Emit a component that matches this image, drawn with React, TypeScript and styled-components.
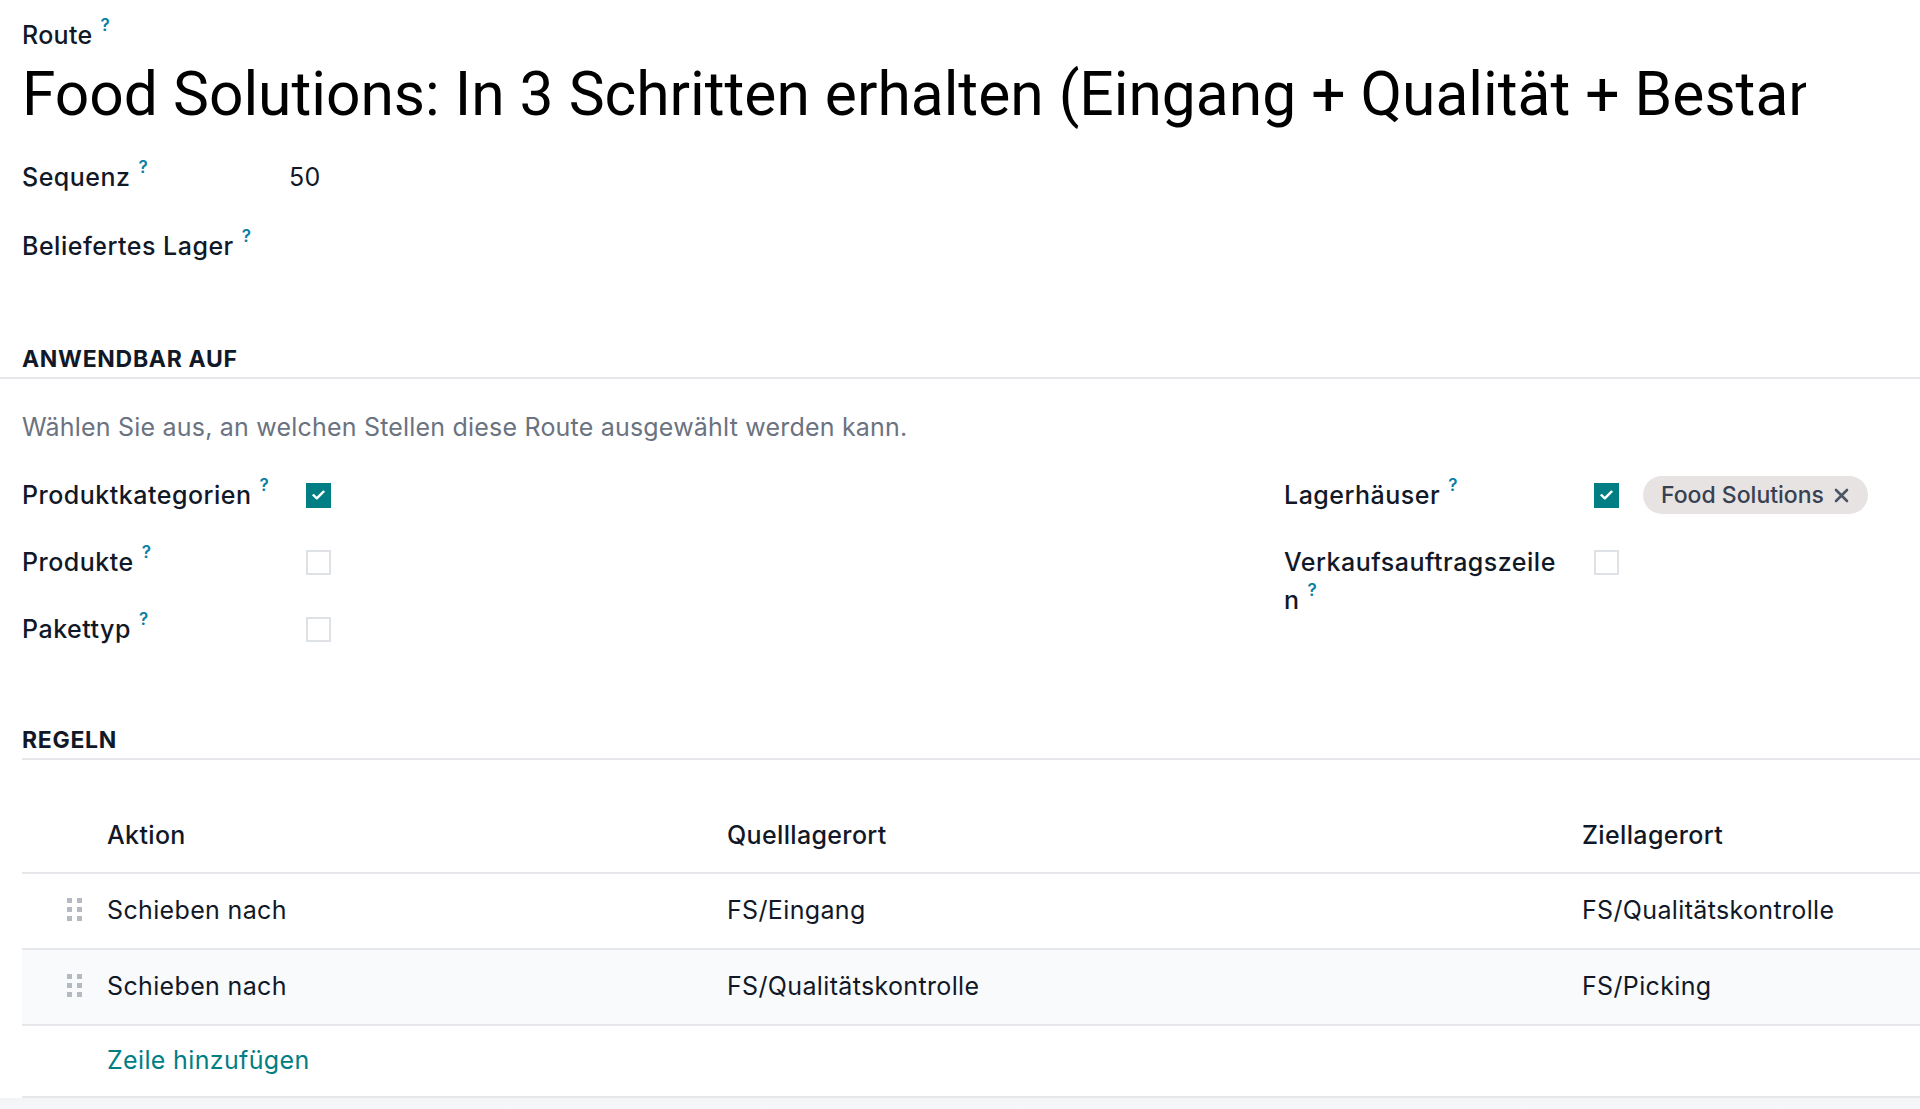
import styled, { createGlobalStyle } from 'styled-components';

const GlobalStyle = createGlobalStyle`
  html, body {
    margin: 0;
    padding: 0;
    background: #ffffff;
  }
  body {
    font-family: Inter, 'Noto Sans', 'Liberation Sans', sans-serif;
    color: #111827;
    overflow: hidden;
  }
`;

const Page = styled.div`
  width: 1920px;
  height: 1109px;
  overflow: hidden;
  display: flex;
  flex-direction: column;
`;

const Sheet = styled.div`
  padding-left: 22px;
  display: flex;
  flex-direction: column;
`;

const Help = styled.sup`
  color: #0a7fa3;
  font-size: 17px;
  font-weight: 600;
  margin-left: 8px;
  vertical-align: top;
  position: relative;
  top: -10px;
  letter-spacing: 0;
`;

const RouteLabel = styled.div`
  padding-top: 17px;
  font-size: 25px;
  line-height: 36px;
  font-weight: 500;
  letter-spacing: 0.3px;
`;

const Title = styled.h1`
  margin: 6px 0 0;
  width: 1784px;
  font-family: Roboto, 'Liberation Sans', sans-serif;
  font-size: 60.5px;
  line-height: 72px;
  font-weight: 400;
  color: #000000;
  white-space: nowrap;
  overflow: hidden;
`;

const FieldRow = styled.div<{ $labelWidth: number }>`
  display: grid;
  grid-template-columns: ${(p) => p.$labelWidth}px 1fr;
  align-items: start;
  min-height: 46px;
  padding: 4px 0;
  box-sizing: border-box;
`;

const FieldLabel = styled.div`
  font-size: 25px;
  line-height: 38px;
  font-weight: 500;
  letter-spacing: 0.5px;
  word-break: break-all;
  padding-right: 16px;
`;

const FieldValue = styled.div`
  font-size: 25px;
  line-height: 38px;
  letter-spacing: 0.4px;
  display: flex;
  align-items: center;
  gap: 24px;
  min-height: 38px;
`;

const HeaderFields = styled.div`
  display: flex;
  flex-direction: column;
  gap: 23px;
  margin-top: 23px;
`;

const SectionTitle = styled.div<{ $bleed?: boolean }>`
  margin-top: ${(p) => (p.$bleed ? 72 : 70)}px;
  margin-left: ${(p) => (p.$bleed ? -22 : 0)}px;
  padding-left: ${(p) => (p.$bleed ? 22 : 0)}px;
  font-size: 23px;
  line-height: 36px;
  font-weight: 700;
  letter-spacing: 0.7px;
  text-transform: uppercase;
  border-bottom: 2px solid #e5e7eb;
`;

const Description = styled.div`
  margin-top: 30px;
  font-size: 25px;
  line-height: 36px;
  letter-spacing: 0.2px;
  color: #6b7280;
`;

const Groups = styled.div`
  display: grid;
  grid-template-columns: 1262px 1fr;
  margin-top: 27px;
`;

const Group = styled.div`
  display: flex;
  flex-direction: column;
  gap: 21px;
`;

const Checkbox = styled.span<{ $checked?: boolean }>`
  width: 25px;
  height: 25px;
  box-sizing: border-box;
  margin-left: 17px;
  flex-shrink: 0;
  display: inline-flex;
  align-items: center;
  justify-content: center;
  background: ${(p) => (p.$checked ? '#017e84' : '#ffffff')};
  border: ${(p) => (p.$checked ? 'none' : '2px solid #dee2e6')};
`;

const Tag = styled.span`
  display: inline-flex;
  align-items: center;
  gap: 10px;
  height: 38px;
  padding: 0 19px 0 18px;
  border-radius: 19px;
  background: #e8e3e3;
  color: #374151;
  font-size: 23px;
  font-weight: 500;
  letter-spacing: 0;
`;

const Table = styled.div`
  margin-top: 40px;
  display: flex;
  flex-direction: column;
`;

const Row = styled.div<{ $height: number; $shade?: boolean }>`
  display: grid;
  grid-template-columns: 70px 620px 855px 1fr;
  align-items: center;
  height: ${(p) => p.$height}px;
  padding-bottom: 3px;
  box-sizing: content-box;
  border-bottom: 2px solid #e5e7eb;
  background: ${(p) => (p.$shade ? '#f9fafb' : '#ffffff')};
  font-size: 25px;
  letter-spacing: 0.35px;
`;

const Cell = styled.div<{ $head?: boolean }>`
  padding-left: 15px;
  font-weight: ${(p) => (p.$head ? 500 : 400)};
  white-space: nowrap;
`;

const Handle = styled.div`
  display: flex;
  justify-content: flex-end;
  padding-right: 10px;
`;

const AddLine = styled.a`
  color: #017e84;
  text-decoration: none;
  cursor: pointer;
`;

const Footer = styled.div`
  flex: 1;
  background: linear-gradient(#f3f4f6, #f6f7f8);
`;

function HelpMark() {
  return <Help>?</Help>;
}

function CheckIcon() {
  return (
    <svg width="13" height="10" viewBox="0 0 13 10">
      <path d="M1.5 5.2 L4.8 8.3 L11.5 1.7" fill="none" stroke="#fff" strokeWidth="2.4" strokeLinecap="round" strokeLinejoin="round" />
    </svg>
  );
}

function CloseIcon() {
  return (
    <svg width="15" height="15" viewBox="0 0 15 15">
      <path d="M2 2 L13 13 M13 2 L2 13" stroke="#4b5563" strokeWidth="2.6" strokeLinecap="round" />
    </svg>
  );
}

function DragHandle() {
  return (
    <svg width="15" height="23" viewBox="0 0 15 23">
      {[0, 9, 18].map((y) =>
        [0, 10].map((x) => <rect key={`${x}-${y}`} x={x} y={y} width="5" height="5" fill="#b4bac2" />)
      )}
    </svg>
  );
}

const rules = [
  { action: 'Schieben nach', from: 'FS/Eingang', to: 'FS/Qualitätskontrolle' },
  { action: 'Schieben nach', from: 'FS/Qualitätskontrolle', to: 'FS/Picking' },
];

export default function App() {
  return (
    <Page>
      <GlobalStyle />
      <Sheet>
        <RouteLabel>
          Route<HelpMark />
        </RouteLabel>
        <Title>Food Solutions: In 3 Schritten erhalten (Eingang + Qualität + Bestand)</Title>

        <HeaderFields>
          <FieldRow $labelWidth={267}>
            <FieldLabel>
              Sequenz<HelpMark />
            </FieldLabel>
            <FieldValue>50</FieldValue>
          </FieldRow>
          <FieldRow $labelWidth={267}>
            <FieldLabel>
              Beliefertes Lager<HelpMark />
            </FieldLabel>
            <FieldValue />
          </FieldRow>
        </HeaderFields>

        <SectionTitle $bleed>Anwendbar auf</SectionTitle>
        <Description>Wählen Sie aus, an welchen Stellen diese Route ausgewählt werden kann.</Description>

        <Groups>
          <Group>
            <FieldRow $labelWidth={267}>
              <FieldLabel>
                Produktkategorien<HelpMark />
              </FieldLabel>
              <FieldValue>
                <Checkbox $checked>
                  <CheckIcon />
                </Checkbox>
              </FieldValue>
            </FieldRow>
            <FieldRow $labelWidth={267}>
              <FieldLabel>
                Produkte<HelpMark />
              </FieldLabel>
              <FieldValue>
                <Checkbox />
              </FieldValue>
            </FieldRow>
            <FieldRow $labelWidth={267}>
              <FieldLabel>
                Pakettyp<HelpMark />
              </FieldLabel>
              <FieldValue>
                <Checkbox />
              </FieldValue>
            </FieldRow>
          </Group>
          <Group>
            <FieldRow $labelWidth={293}>
              <FieldLabel>
                Lagerhäuser<HelpMark />
              </FieldLabel>
              <FieldValue>
                <Checkbox $checked>
                  <CheckIcon />
                </Checkbox>
                <Tag>
                  Food Solutions
                  <CloseIcon />
                </Tag>
              </FieldValue>
            </FieldRow>
            <FieldRow $labelWidth={293}>
              <FieldLabel>
                Verkaufsauftragszeilen<HelpMark />
              </FieldLabel>
              <FieldValue>
                <Checkbox />
              </FieldValue>
            </FieldRow>
          </Group>
        </Groups>

        <SectionTitle>Regeln</SectionTitle>

        <Table>
          <Row $height={69}>
            <Cell />
            <Cell $head>Aktion</Cell>
            <Cell $head>Quelllagerort</Cell>
            <Cell $head>Ziellagerort</Cell>
          </Row>
          {rules.map((r, i) => (
            <Row key={i} $height={71} $shade={i % 2 === 1}>
              <Handle>
                <DragHandle />
              </Handle>
              <Cell>{r.action}</Cell>
              <Cell>{r.from}</Cell>
              <Cell>{r.to}</Cell>
            </Row>
          ))}
          <Row $height={67}>
            <Cell />
            <Cell>
              <AddLine>Zeile hinzufügen</AddLine>
            </Cell>
            <Cell />
            <Cell />
          </Row>
        </Table>
      </Sheet>
      <Footer />
    </Page>
  );
}
